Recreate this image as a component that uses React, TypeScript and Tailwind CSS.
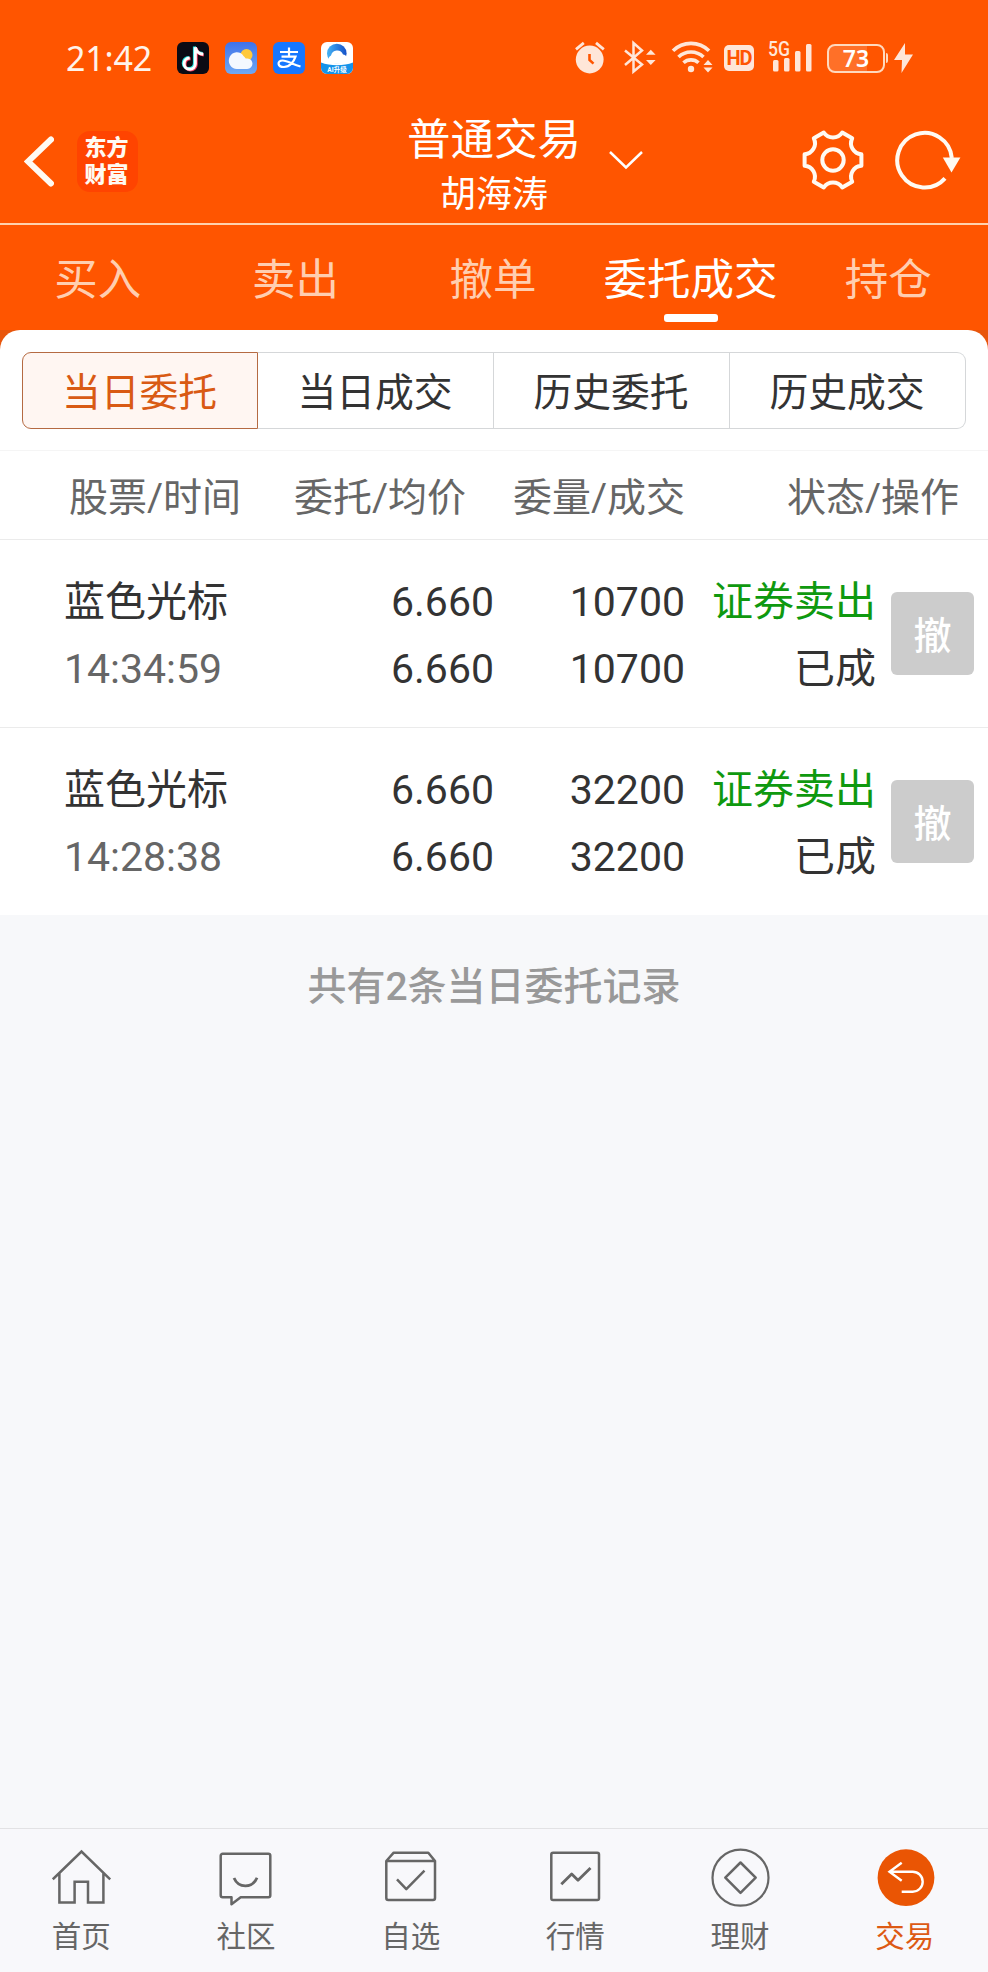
import type { ReactNode } from "react";
import clsx from "clsx";

const tabs = ["买入", "卖出", "撤单", "委托成交", "持仓"];
const segments = ["当日委托", "当日成交", "历史委托", "历史成交"];

const orders = [
  { name: "蓝色光标", time: "14:34:59", price: "6.660", avg: "6.660", qty: "10700", filled: "10700", side: "证券卖出", status: "已成" },
  { name: "蓝色光标", time: "14:28:38", price: "6.660", avg: "6.660", qty: "32200", filled: "32200", side: "证券卖出", status: "已成" },
];

function NavIcon({ children }: { children: ReactNode }) {
  return (
    <svg
      viewBox="0 0 60 62"
      className="h-[62px] w-[60px]"
      fill="none"
      stroke="currentColor"
      strokeWidth="2.5"
      strokeLinejoin="round"
    >
      {children}
    </svg>
  );
}

const navItems = [
  {
    label: "首页",
    icon: (
      <NavIcon>
        <path d="M.8 33.3 29.5 5.6 58.2 33.3M7.4 27.5v29h15.2V35.7H36v20.8h15.4v-29" strokeLinejoin="miter" />
      </NavIcon>
    ),
  },
  {
    label: "社区",
    icon: (
      <NavIcon>
        <path d="M5.7 7.7h45.6a2 2 0 0 1 2 2v39.6a2 2 0 0 1-2 2H23.7l-9.2 7v-7H5.7a2 2 0 0 1-2-2V9.7a2 2 0 0 1 2-2Z" />
        <path d="M17 32c4.5 10.5 18.5 10.5 23-.3" strokeWidth="2.8" />
      </NavIcon>
    ),
  },
  {
    label: "自选",
    icon: (
      <NavIcon>
        <path d="M4.3 15 11.7 6.7h34.6L53 15v37a2 2 0 0 1-2 2H6.3a2 2 0 0 1-2-2ZM4.3 15H53" />
        <path d="m15 33.3 9.300 9.800 18.200-18.400" />
      </NavIcon>
    ),
  },
  {
    label: "行情",
    icon: (
      <NavIcon>
        <rect x="5.300" y="6.700" width="47.700" height="47.300" rx="1.800" />
        <path d="m15.300 38.300 10.400-10.400 6.300 6.300L44.500 22" strokeWidth="2.800" />
      </NavIcon>
    ),
  },
  {
    label: "理财",
    icon: (
      <NavIcon>
        <circle cx="29.500" cy="31.700" r="28" strokeWidth="2.200" />
        <path d="m29.500 16.500 15.200 15.200-15.200 15.200-15.200-15.200Z" />
      </NavIcon>
    ),
  },
  {
    label: "交易",
    active: true,
    icon: (
      <NavIcon>
        <circle cx="30" cy="31.700" r="28.400" fill="#ea5504" stroke="none" />
        <path d="M25.700 16.700 13.500 25.700l12.200 9M13.500 25.700h23.200a10 10 0 0 1 0 20h-11" stroke="#fff" strokeWidth="2.400" strokeLinejoin="miter" />
      </NavIcon>
    ),
  },
];

function StatusBar() {
  return (
    <div className="flex h-[116px] items-center pl-[66px] text-[#ffe6d8]">
      <span className="w-[111px] font-['Noto_Sans'] text-[34px] leading-none tracking-[-0.2px] text-[#fff3ea]">21:42</span>

      {/* Notification icons */}
      <div className="flex gap-4">
        <svg viewBox="0 0 32 32" className="size-8">
          <rect width="32" height="32" rx="6" fill="#0b0b14" />
          <g fill="none" strokeWidth="3">
            <path d="M17.400 4.500V21a5.600 5.600 0 1 1-5.600-5.600M17.400 4.500c.8 4.500 4 6.700 8.300 7" stroke="#25e5e0" />
            <path d="M19.200 6V22.400a5.600 5.600 0 1 1-5.600-5.600M19.200 6c.8 4.500 3.500 6.700 7.600 7" stroke="#f33b5c" />
            <path d="M18.300 5.200v16.500a5.600 5.600 0 1 1-5.600-5.600M18.300 5.200c.8 4.500 3.700 6.700 8 7" stroke="#fff" />
          </g>
        </svg>
        <svg viewBox="0 0 32 32" className="size-8">
          <defs>
            <linearGradient id="sky" x1="0" y1="0" x2="0" y2="1">
              <stop stopColor="#3f72ea" />
              <stop offset="1" stopColor="#6fa9f4" />
            </linearGradient>
            <linearGradient id="ring" x1="0" y1="0" x2="1" y2="0">
              <stop stopColor="#45b4f5" />
              <stop offset="1" stopColor="#1450c8" />
            </linearGradient>
          </defs>
          <rect width="32" height="32" rx="6" fill="url(#sky)" />
          <circle cx="21.500" cy="13" r="6" fill="#ffc93c" />
          <path d="M12 27a8 8.400 0 1 1 6.500-13 8 8 0 0 1 2.200 2.600A5.300 5.300 0 1 1 22 27Z" fill="#f4f8ff" />
        </svg>
        <svg viewBox="0 0 32 32" className="size-8">
          <rect width="32" height="32" rx="6" fill="#1677ff" />
          <g fill="none" stroke="#fff" strokeWidth="2.200">
            <path d="M7 10h18M16 5.500v9M8.500 14.600h14c-1.500 4.500-5.500 10.400-11.500 10.400-7 0-7-6.500-1.500-6.500 5 0 9.500 3.500 18 6" />
          </g>
        </svg>
        <svg viewBox="0 0 32 32" className="size-8">
          <rect width="32" height="32" rx="6" fill="#fff" />
          <path d="M0 20.500c9 3.500 23 3.500 32 0V26a6 6 0 0 1-6 6H6a6 6 0 0 1-6-6Z" fill="#1593ea" />
          <circle cx="15.800" cy="11.500" r="9.800" fill="url(#ring)" />
          <path d="M10 13.500a6.300 6.300 0 0 1 12-1 4.500 4.500 0 0 1 2.500 8c-4 1.500-13 1.500-16 0a4.500 4.500 0 0 1 1.500-7Z" fill="#fff" />
          <text x="16" y="30.300" fontSize="6.500" fontWeight="700" textAnchor="middle" fill="#fff">AI升级</text>
        </svg>
      </div>

      {/* System icons */}
      <svg viewBox="575 40 140 36" className="ml-[222px] h-9 w-[140px]" fill="none" stroke="currentColor">
        <g>
          <circle cx="589.700" cy="59.500" r="13.900" fill="currentColor" stroke="none" />
          <path d="M589.500 54v6l4 3.600" stroke="#ff5500" strokeWidth="2.600" />
          <path d="m576 49.300 7.800-6.500M603.800 49.300l-7.800-6.500" strokeWidth="2.800" />
        </g>
        <path d="m625 50.500 17 14-8.500 7V43l8.500 7.500-17 14.500" strokeWidth="2.500" />
        <path d="m646 54.800 4.800-5 4.800 5ZM646 60l4.800 5 4.800-5Z" fill="currentColor" stroke="none" />
        <g strokeWidth="3.600">
          <path d="M673 50.800a25.500 25.500 0 0 1 36 0M678.500 57a18 18 0 0 1 25 0M683.500 62.800a11 11 0 0 1 15 0" />
        </g>
        <circle cx="691" cy="69" r="3.200" fill="currentColor" stroke="none" />
        <path d="m703.500 65 4.500-5 4.500 5ZM703.500 67.500l4.500 5 4.500-5Z" fill="currentColor" stroke="none" />
      </svg>
      <span className="ml-[9px] flex h-[26px] w-[30px] items-center justify-center rounded-[5px] bg-[#ffe6d8] font-['Roboto'] text-[20px] leading-none font-bold tracking-[-1px] text-[#ff5500]">
        HD
      </span>
      <svg viewBox="766 30 48 56" className="ml-[12px] h-[56px] w-[48px] fill-current">
        <text x="768" y="56" fontSize="19.500" fontWeight="500" fontFamily="Roboto" textLength="22" lengthAdjust="spacingAndGlyphs">5G</text>
        <rect x="773" y="60" width="5.500" height="11.500" rx="1.500" />
        <rect x="784" y="58" width="5.500" height="13.500" rx="1.500" />
        <rect x="795" y="51" width="5.500" height="20.500" rx="1.500" />
        <rect x="806" y="44" width="5.500" height="27.500" rx="1.500" />
      </svg>
      <span className="ml-[13px] flex h-[29px] w-[58px] items-center justify-center rounded-[8px] border-2 border-[#ffd9bd] bg-linear-to-r from-[#ff7028] from-70% to-[#ff5500] to-70% font-['Noto_Sans'] text-[23px] leading-none font-semibold text-white">
        73
      </span>
      <span className="ml-px h-[10px] w-[2px] rounded-r bg-[#ffd9bd]" />
      <svg viewBox="0 0 19 30" className="ml-[6px] h-[30px] w-[19px] fill-current">
        <path d="M11 0 0 17h8L7.500 30 19 11.500h-8Z" />
      </svg>
    </div>
  );
}

function TitleBar() {
  return (
    <div className="grid h-[109px] grid-cols-[1fr_auto_1fr] border-b-2 border-[#ffd2ae] text-[#fffaf2]">
      <div className="flex items-center pb-[17px] pl-[24px]">
        <svg viewBox="0 0 30 52" className="h-[52px] w-[30px]" fill="none" stroke="currentColor" strokeWidth="6" strokeLinecap="round">
          <path d="M27 4.500 4 26.500 27 48.500" />
        </svg>
        <div className="ml-[23px] flex size-[61px] flex-col items-center justify-center rounded-[13px] bg-[#ff4400] pr-[2px] text-[22px] leading-[27px] font-black">
          <span>东方</span>
          <span>财富</span>
        </div>
      </div>

      <div className="relative flex flex-col items-center pt-[2px] text-white">
        <span className="h-[51px] text-[43.500px] leading-[46px]">普通交易</span>
        <span className="text-[36px] leading-[52px]">胡海涛</span>
        <svg viewBox="0 0 34 20" className="absolute top-[34px] left-[202px] h-5 w-[34px]" fill="none" stroke="currentColor" strokeWidth="2.500">
          <path d="m1 2 16 15.500L33 2" />
        </svg>
      </div>

      <div className="flex items-center justify-end gap-[30px] pr-[27px] pb-[19px]">
        <svg viewBox="-32 -32 64 64" className="size-16" fill="none" stroke="currentColor" strokeWidth="4" strokeLinejoin="round">
          <path d="M28.400 5.800A11 11 0 0 0 19.200 21.700L9.200 27.500A11 11 0 0 0-9.200 27.500L-19.200 21.700A11 11 0 0 0-28.400 5.800V-5.800A11 11 0 0 0-19.200-21.700L-9.200-27.500A11 11 0 0 0 9.200-27.500L19.200-21.700A11 11 0 0 0 28.400-5.800Z" />
          <circle r="10.700" />
        </svg>
        <svg viewBox="-29.500 -32 66 64" className="h-16 w-[66px]" fill="none" stroke="currentColor" strokeWidth="4">
          <path d="M27.300-2A27.300 27.300 0 1 0 20.500 18.300" />
          <path d="M18.300-2.500h17.600L27 12.500Z" fill="currentColor" stroke="none" />
        </svg>
      </div>
    </div>
  );
}

function OrderRow({ order }: { order: (typeof orders)[number] }) {
  return (
    <div className="flex h-[188px] items-center border-b border-[#ebebeb] pl-[64px] text-[41px] leading-[66px] text-[#333] last:h-[187px] last:border-b-0">
      <div className="flex w-[210px] flex-col pt-[3px]">
        <span className="h-[67px]">{order.name}</span>
        <span className="h-[66px] text-[#666]">{order.time}</span>
      </div>
      <div className="flex w-[220px] flex-col pt-[3px] text-right">
        <span className="h-[67px]">{order.price}</span>
        <span className="h-[66px]">{order.avg}</span>
      </div>
      <div className="flex w-[191px] flex-col pt-[3px] text-right">
        <span className="h-[67px]">{order.qty}</span>
        <span className="h-[66px]">{order.filled}</span>
      </div>
      <div className="flex w-[191px] flex-col pt-[4px] text-right">
        <span className="h-[67px] text-[#0f990f]">{order.side}</span>
        <span className="h-[66px]">{order.status}</span>
      </div>
      <button className="ml-[15px] flex size-[83px] items-center justify-center rounded-md bg-[#ccc] pt-[5px] text-[38px] leading-none font-medium text-white">
        撤
      </button>
    </div>
  );
}

export default function App() {
  return (
    <div className="flex h-[1972px] w-[988px] flex-col overflow-hidden bg-[#f7f8fa] font-['Roboto','Noto_Sans_CJK_SC',sans-serif]">
      <header className="bg-[#ff5500]">
        <StatusBar />
        <TitleBar />
        <nav className="grid h-[105px] grid-cols-5">
          {tabs.map((tab) => (
            <div
              key={tab}
              className={clsx(
                "relative flex items-center justify-center pt-[7px] pr-[2px] text-[43.500px] leading-none whitespace-nowrap",
                tab === "委托成交" ? "text-white" : "text-[#ffceb0]",
              )}
            >
              {tab}
              {tab === "委托成交" && <span className="absolute bottom-2 h-2 w-[54px] rounded-[3px] bg-white" />}
            </div>
          ))}
        </nav>
      </header>

      <main className="flex-1">
        <div className="bg-[linear-gradient(#e8560c_20px,#fff_20px)]">
          <div className="h-[120px] rounded-t-[20px] bg-white px-[22px] pt-[22px]">
            <div className="flex h-[77px]">
              {segments.map((segment, i) => (
                <div
                  key={segment}
                  className={clsx(
                    "flex w-[236px] items-center justify-center border pt-[6px] pr-px text-[38.800px] leading-none",
                    i === 0
                      ? "rounded-l-[9px] border-[#b56a42] bg-[#fff6f2] text-[#d95a14]"
                      : "border-l-0 border-[#d5d7d9] text-[#333] last:rounded-r-[9px]",
                  )}
                >
                  {segment}
                </div>
              ))}
            </div>
          </div>
        </div>

        <div className="flex h-[90px] items-center border-y border-t-[#f5f5f5] border-b-[#ebebeb] bg-white pt-[6px] pl-[69px] text-[39px] leading-none text-[#666]">
          <span className="w-[210px]">股票/时间</span>
          <span className="w-[187px] text-right">委托/均价</span>
          <span className="w-[219px] text-right">委量/成交</span>
          <span className="w-[274px] text-right">状态/操作</span>
        </div>

        <div className="bg-white">
          {orders.map((order) => (
            <OrderRow key={order.time} order={order} />
          ))}
        </div>

        <p className="pt-[52px] text-center text-[39px] leading-[40px] font-medium text-[#999]">
          共有2条当日委托记录
        </p>
      </main>

      <footer className="grid h-[144px] grid-cols-6 border-t border-[#e2e2e4] bg-[#f8f8fb] pt-[17px]">
        {navItems.map((item) => (
          <div
            key={item.label}
            className={clsx("flex flex-col items-center", item.active ? "text-[#dd5a14]" : "text-[#666]")}
          >
            {item.icon}
            <span className="mt-[11px] pr-[2px] text-[29.500px] leading-[36px]">{item.label}</span>
          </div>
        ))}
      </footer>
    </div>
  );
}
